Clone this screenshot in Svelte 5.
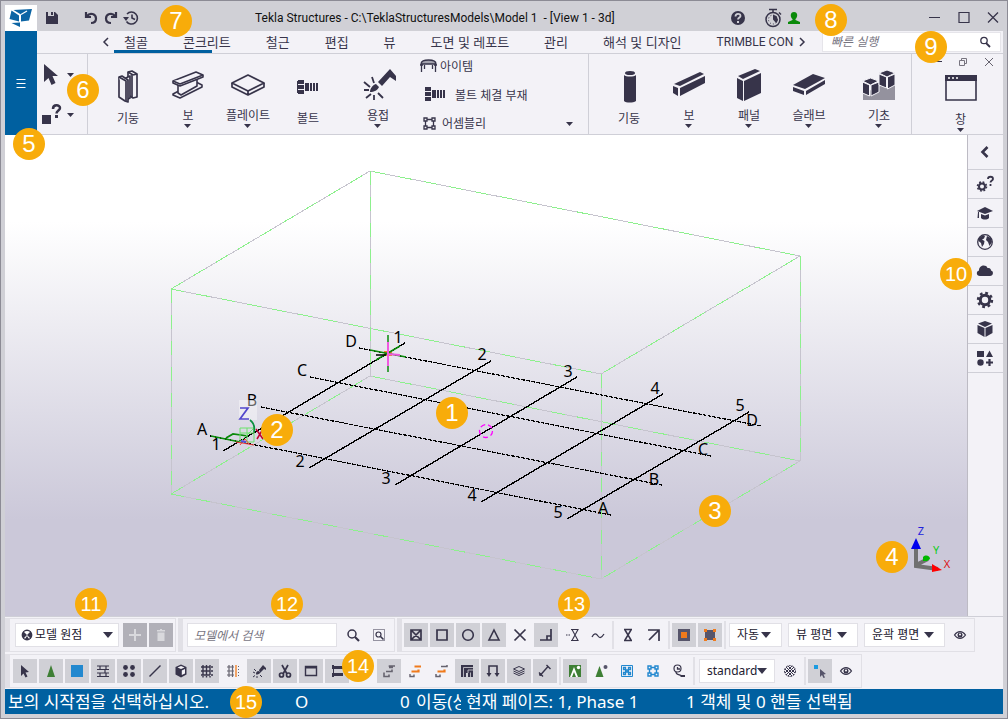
<script>
  const icons = {
    logo: '<g fill="#0b64a4"><path d="M4.500 5.500L2.500 14l9.500 2.500v-6z"/><path d="M6.500 5L25 4l-3 11.500-8 1V9.500z"/><path d="M4.500 18l8.500-.5V22z"/></g><path d="M14 9.500l6-3.500" stroke="#fff" stroke-width="1.200"/>',
    save: '<path fill="currentColor" d="M6 6h9l3 3v9H6z"/><path fill="#d0d0d6" d="M8 6h6v4H8z"/><path fill="currentColor" d="M11 6h2v3h-2z"/>',
    undo: '<path d="M7 6v5h5M8 10c3-4 9-2 9 2.500 0 3-2 4.500-5 4.500" fill="none" stroke="currentColor" stroke-width="2.200"/>',
    redo: '<path d="M17 6v5h-5M16 10c-3-4-9-2-9 2.500 0 3 2 4.500 5 4.500" fill="none" stroke="currentColor" stroke-width="2.200"/>',
    history: '<g fill="none" stroke="currentColor" stroke-width="1.600"><path d="M8 8a6 6 0 1 1-.5 7.500M13 8.500V12l3 1.500"/></g><path fill="currentColor" d="M4 11h6l-3 4z"/>',
    help: '<circle cx="12" cy="12" r="7" fill="currentColor"/><path d="M9.500 10.500c0-3.500 5-3.500 5-.5 0 1.500-2.500 1.500-2.500 3.500" fill="none" stroke="#d0d0d6" stroke-width="1.800"/><path fill="#d0d0d6" d="M11 15h2v2h-2z"/>',
    timer: '<circle cx="12" cy="13.500" r="7" fill="none" stroke="currentColor" stroke-width="1.500"/><path d="M12 9a4.500 4.500 0 0 1 3 8l-3-3.500z" fill="currentColor"/><circle cx="12" cy="13.500" r="4.500" fill="none" stroke="currentColor" stroke-dasharray="1 2"/><path d="M8 3.500h8M12 3.500v3M18 6.500l2 2" stroke="currentColor" stroke-width="1.500"/>',
    user: '<path fill="#0a8a0a" d="M12 6c4 0 4 5 1.500 7v1l4.500 2v2H6v-2l4.500-2v-1C8 11 8 6 12 6z"/>',
    min: '<path d="M6 11.500h11" stroke="currentColor"/>',
    max: '<path d="M7 6.500h10v10H7z" fill="none" stroke="currentColor" stroke-width="1.200"/>',
    close: '<path d="M7 6.500l10 10M17 6.500l-10 10" stroke="currentColor" stroke-width="1.300"/>',
    restore: '<path d="M8.500 10.500h5v5h-5zM10.500 10V8.500h5v5H14" fill="none" stroke="#77747f"/>',
    smallclose: '<path d="M8 8l8 8M16 8l-8 8" stroke="#66636f"/>',
    left: '<path d="M14 8l-4 4 4 4" fill="none" stroke="currentColor" stroke-width="1.500"/>',
    right: '<path d="M10 8l4 4-4 4" fill="none" stroke="currentColor" stroke-width="1.500"/>',
    search: '<circle cx="11" cy="11" r="4" fill="none" stroke="currentColor" stroke-width="1.500"/><path d="M14 14l4 4" stroke="currentColor" stroke-width="2.200"/>',
    searchSmall: '<circle cx="11" cy="10.500" r="3.200" fill="none" stroke="currentColor" stroke-width="1.300"/><path d="M13 13l4 4" stroke="currentColor" stroke-width="1.800"/>',
    searchBox: '<path d="M6.500 6.500h11v11h-11z" fill="none" stroke="currentColor" stroke-dasharray="1 1"/><circle cx="11.500" cy="11.500" r="2.500" fill="none" stroke="currentColor" stroke-width="1.200"/><path d="M13.500 13.500l3 3" stroke="currentColor" stroke-width="1.600"/>',
    menu: '<path d="M7.500 8.500h9M7.500 12.500h9M7.500 16.500h9" stroke="#fff" stroke-width="1.200"/>',
    pointer: '<path fill="currentColor" d="M4 1l14 12h-5.500l3 7-4 2-3-7L4 19z"/>',
    inquire: '<path fill="currentColor" d="M2 12h9v9H2z"/><path d="M13 6c0-5 7-4.500 7-1 0 2.500-3.500 2.500-3.500 5.500" fill="none" stroke="currentColor" stroke-width="2.500"/><path fill="currentColor" d="M15 12h3v3h-3z"/>',
    // ribbon, 36 px
    scolumn: '<g fill="#f3f2f7" stroke="currentColor" stroke-width="1.700" stroke-linejoin="round"><path d="M18 4l4-1 5 3v23l-4 1-5-3z"/><path d="M22 6v23M18 4l5 3M23 7l4-1"/><path d="M14 11l6-3v22l-4 2z"/><path d="M9 9l3-1 6 4v22l-3-1-6-4z"/><path d="M9 9l7 4v20"/></g>',
    sbeam: '<g fill="#f3f2f7" stroke="currentColor" stroke-width="1.600" stroke-linejoin="round"><path d="M3 26l23-12 6 3v2L10 30l-7-3z"/><path d="M8 16v9l3 2 16-9v-7"/><path d="M3 13L26 4l7 3v2L10 18l-7-3z"/><path d="M3 13l7 3L33 7"/></g>',
    plate: '<g fill="none" stroke="currentColor" stroke-width="1.700" stroke-linejoin="round"><path d="M2 15l16-8 16 8-16 8z"/><path d="M2 15v4l16 8 16-8v-4M18 23v4"/></g>',
    bolt: '<path fill="currentColor" d="M8 12h6v4H8zM8 17h6v4H8zM8 22h6v4H8zM15 15h4v8h-4zM20 15h2v8h-2zM23 15h2v8h-2zM26 15h2v8h-2z"/><path d="M7.500 13v12" stroke="currentColor"/>',
    weld: '<path fill="currentColor" d="M18 14L30 1l6 7v5l-6-4-8 9zM10 24c0-4 4-8 6-8l3 3c-1 3-5 5-9 5z"/><path d="M4 14l6 5M4 22h5M12 9l2 6M6 30l5-4M14 27v5M18 25l5 5" stroke="currentColor" stroke-width="1.800"/>',
    item: '<path d="M3 7c0-3 3-4 7.500-4S18 4 18 7z" fill="#a3a2ad" stroke="currentColor" stroke-width="1.300"/><path d="M3.500 7v8M17.500 7v8M6.500 8v4M14.500 8v4M2 8h3M16 8h3" stroke="currentColor" stroke-width="1.300" fill="none"/>',
    boltSmall: '<path fill="currentColor" d="M1 3h6v4H1zM1 8h6v4H1zM1 13h6v4H1zM8 6h4v8H8zM13 6h2v8h-2zM16 6h2v8h-2zM19 6h2v8h-2z"/>',
    assembly: '<g fill="none" stroke="currentColor" stroke-width="1.300"><path d="M4 4h3v3H4zM12 4h3v3h-3zM4 12h3v3H4zM12 12h3v3h-3zM7 5.500h5M7 13.500h5M5.500 7v5M13.500 7v5"/></g>',
    ccolumn: '<path fill="currentColor" d="M13 7v26c2 2 9 2 12 0V7c-2 2-10 2-12 0z"/><ellipse cx="19" cy="5" rx="5" ry="2" fill="currentColor"/>',
    cbeam: '<g fill="currentColor"><path d="M3 16L29 4l4 2L9 18z"/><path d="M2 18l5 2v8l-5-3zM9 20l25-12v7L9 28z"/></g>',
    panel: '<g fill="currentColor"><path d="M7 8L24 1l5 2-17 8z"/><path d="M6 10l6 3v20l-6-3zM13 13l17-8v20l-17 8z"/></g>',
    slab: '<g fill="currentColor"><path d="M2 17L22 6l12 4-20 11z"/><path d="M2 19l11 4v4L2 23zM15 23l19-11v4L15 27z"/></g>',
    footing: '<path fill="#94929e" d="M2 26l12-6 20-8v20H2z"/><g fill="currentColor" stroke="#f3f2f7"><path d="M1.500 13l8-3 8 3-8 4z"/><path d="M1.500 14l7 3v11l-7-3zM10 17l8-3v10l-8 4z"/><path d="M18 5l8-3 8 3-8 4z"/><path d="M18 6l7.500 3v11L18 17zM26.500 9L34 6v11l-7.500 4z"/></g>',
    window: '<path d="M3 6h30v24H3z" fill="none" stroke="currentColor" stroke-width="1.600"/><path fill="currentColor" d="M2 5h32v6H2z"/><path d="M5 8h2M9 8h2M13 8h2" stroke="#fff" stroke-width="1.500"/>',
    // side panel
    chev: '<path d="M14.500 7l-5 5 5 5" fill="none" stroke="currentColor" stroke-width="2.600"/>',
    gearq: '<circle cx="9" cy="14.500" r="3" fill="none" stroke="currentColor" stroke-width="2"/><circle cx="9" cy="14.500" r="4.500" fill="none" stroke="currentColor" stroke-width="1.600" stroke-dasharray="1.800 1.750"/><path d="M15 7c0-3 5-3 5 0 0 1.500-2.500 1.500-2.500 3.500M17.500 12v2" fill="none" stroke="currentColor" stroke-width="1.800"/>',
    cap: '<path fill="currentColor" d="M4 10l8-4 8 4-8 3zM8 13l4 1.500 4-1.500v4c-2 2-6 2-8 0zM5 11h1v6H4.500z"/>',
    globe: '<circle cx="12" cy="12" r="7.300" fill="none" stroke="currentColor" stroke-width="1.300"/><path fill="currentColor" d="M6 8l4-3 2 1-1 2.500-2 1 2.500 1.500-.5 3-2 3-1-4-2.500-2zM14 6l4 2 1 4-2.500 4-1.500-4-2-2z"/>',
    cloud: '<path fill="currentColor" d="M7 17c-4 0-4-5-1-5.500C6 6 13 5 14.500 9c3-.5 3.500 1.500 3.500 2.500 3 .5 2.500 5.500-1 5.500z"/>',
    gear: '<circle cx="12" cy="12" r="4.700" fill="none" stroke="currentColor" stroke-width="3"/><circle cx="12" cy="12" r="7" fill="none" stroke="currentColor" stroke-width="2.400" stroke-dasharray="2.750 2.750"/>',
    cube: '<path fill="currentColor" d="M12 4l7 2.500L12 10 5 6.500zM4.500 8l7 3v9l-7-4zM19.500 8l-7 3v9l7-4z"/>',
    shapes: '<path fill="currentColor" d="M4 5h7v6H4zM16.500 4.500l3.500 6.500h-7z"/><circle cx="7.500" cy="16.500" r="3.200" fill="currentColor"/><path d="M16.500 13v7M13 16.500h7" stroke="currentColor" stroke-width="2.200"/>',
    // toolbars
    ball: '<circle cx="7" cy="7" r="4.700" fill="#fff" stroke="currentColor" stroke-width="1.400"/><path fill="currentColor" d="M7 7L3 3v8zM7 7l4-4v8zM5 11l2-3 2 3z"/>',
    plus: '<path d="M12 6v12M6 12h12" stroke="#d9d9dd" stroke-width="2"/>',
    trash: '<path fill="#d9d9dd" d="M8 7h3V6h2v1h3v1.500H8zM8.500 9.500h7V18h-7z"/>',
    sqx: '<path d="M7 7h10v10H7zM7 7l10 10M17 7L7 17" fill="none" stroke="currentColor" stroke-width="1.700"/>',
    sq: '<path d="M7 7h10v10H7z" fill="none" stroke="currentColor" stroke-width="1.700"/>',
    circ: '<circle cx="12" cy="12" r="5.300" fill="none" stroke="currentColor" stroke-width="1.600"/>',
    tri: '<path d="M12 7l5 10H7z" fill="none" stroke="currentColor" stroke-width="1.600"/>',
    x: '<path d="M6.500 6.500l11 11M17.500 6.500l-11 11" stroke="currentColor" stroke-width="1.700"/>',
    perp: '<path d="M17 6v11H6M13 17v-4h4" fill="none" stroke="currentColor" stroke-width="1.700"/>',
    hourDots: '<path d="M6 12h5" stroke="currentColor" stroke-dasharray="1.500 1"/><path d="M11 6.500h7l-6 11h6l-6-11M11 17.500h2" fill="none" stroke="currentColor" stroke-width="1.100"/>',
    wave: '<path d="M6 14c2-4 4-4 6-1s4 1 6-2" fill="none" stroke="currentColor" stroke-width="1.300"/>',
    hour: '<path d="M8 6.500h8M8 17.500h8M9 7l6 10M15 7L9 17" fill="none" stroke="currentColor" stroke-width="1.500"/>',
    arrowNE: '<path d="M6 7h11v11M17 7L7 17" fill="none" stroke="currentColor" stroke-width="1.700"/>',
    snapA: '<path fill="#56546a" d="M6 6h12v12H6z"/><path fill="#f07a1c" d="M9 9h6v6H9z"/>',
    snapB: '<path fill="#56546a" d="M8 7h8l1 1v8l-1 1H8l-1-1V8z"/><path fill="#f07a1c" d="M6 6h3v3H6zM15 6h3v3h-3zM6 15h3v3H6zM15 15h3v3h-3z"/>',
    eye: '<path d="M6.500 12c3-4.500 8-4.500 11 0-3 4.500-8 4.500-11 0z" fill="none" stroke="currentColor" stroke-width="1.200"/><circle cx="12" cy="12" r="2.500" fill="currentColor"/><circle cx="12" cy="11.500" r="1" fill="#fff"/>',
    arrow: '<path fill="currentColor" d="M8 6l8 7-3.500.5 2 4-2 1-2-4L8 17z"/>',
    cone: '<path fill="#3e7f35" d="M12 6l4 12H8z"/>',
    blue: '<path fill="#2288cf" d="M6 6h12v12H6z"/>',
    grate: '<path d="M6 7h12M6 10.500h12M6 14h12M6 17.500h12M9 7v3M14 10v4M9 14v3M15 7v3M15 14v3" stroke="currentColor" stroke-width="1.200"/>',
    dots: '<g fill="currentColor"><circle cx="8.500" cy="8.500" r="2.400"/><circle cx="15.500" cy="8.500" r="2.400"/><circle cx="8.500" cy="15.500" r="2.400"/><circle cx="15.500" cy="15.500" r="2.400"/></g>',
    line: '<path d="M6.500 17.500l11-11" stroke="currentColor" stroke-width="1.400"/>',
    box: '<path fill="currentColor" d="M12 5.500l5.500 2.500v7.500L12 18.500l-5.500-3V8z"/><path fill="#f3f2f7" d="M12 7l3.500 1.500L12 10 8.500 8.500zM12.800 11.500l3.200-1.500v4.500L12.800 16z"/>',
    grid: '<path d="M6 8h9M6 12h9M6 16h9M8 6v10M11.500 6v10M15 6v10" stroke="currentColor" stroke-width="1.400"/><path d="M16 8h2M16 12h2M16 16h2M8 17v1.500M11.500 17v1.500M15 17v1.500" stroke="currentColor" stroke-width="1.400"/>',
    gridO: '<path d="M6 8h7M6 12h7M6 16h7M8 6v12M11.500 6v12" stroke="#66636f" stroke-width="1.200"/><path d="M15 6v12" stroke="#f07a1c" stroke-width="1.300"/><path d="M17.500 7v11" stroke="#66636f" stroke-dasharray="1 2"/>',
    weldS: '<path fill="currentColor" d="M12 11l4-5 3 3v2l-2-1-4 4zM9 15c0-2 1-3 2.500-3l1.500 1.500c0 1.500-2 2-4 2z"/><path d="M6 13l2 1M7 10l2 2M6 18l2-1.500M10 17v2M13 16l2 2" stroke="currentColor"/>',
    cut: '<g fill="none" stroke="currentColor" stroke-width="1.700"><circle cx="8.500" cy="16" r="2"/><circle cx="15.500" cy="16" r="2"/><path d="M10 15l5-9M14 15L9 6"/></g>',
    win: '<path d="M6.500 7.500h11v9h-11z" fill="none" stroke="currentColor" stroke-width="1.400"/><path d="M6 8.500h12" stroke="currentColor" stroke-width="2"/>',
    ibeam: '<path fill="currentColor" d="M7 6h2v1h9v3H9v4h9v3H9v1H7v-4h1v-4H7z"/>',
    stairs: '<path d="M7 13.500v4h5v-2M9 12.500h6v-2M12.500 8v-1H18M12 8.500h4" fill="none" stroke="#66636f" stroke-width="1.600"/>',
    stairsO: '<path d="M7 15v2.500h4v-2" fill="none" stroke="#66636f" stroke-width="1.400"/><path d="M8.500 12.500h7v-2M11.500 7.500h6.500" fill="none" stroke="#f07a1c" stroke-width="2.200"/>',
    stairsP: '<path d="M7 15v2.500h4v-2M12 7.500h6v-1.500" fill="none" stroke="#66636f" stroke-width="1.500"/><path d="M8.500 12.500h7v-2" fill="none" stroke="#f07a1c" stroke-width="2.200"/>',
    maze: '<path fill="currentColor" d="M6 6h12v12h-5v-4h-2v4H6z"/><path d="M8.500 18V8.500H18M13 14v-3h5M15.500 18v-4.500" stroke="#d0d0d6" stroke-width=".8" fill="none"/>',
    turn: '<path d="M8 16V7h8v9" fill="none" stroke="currentColor" stroke-width="1.600"/><path fill="currentColor" d="M5.500 14h5L8 18zM13.500 14h5L16 18z"/>',
    layers: '<path d="M6.500 10L12 7.500l5.500 2.500-5.500 2.500zM6.500 12l5.500 2.500 5.500-2.500M6.500 14l5.500 2.500 5.500-2.500" fill="none" stroke="currentColor"/>',
    dim: '<path d="M7.500 16L15 7.500M6 13.500l4 4M13.500 6l4 4" fill="none" stroke="currentColor" stroke-width="1.400"/><circle cx="7.500" cy="15.500" r="1.500" fill="currentColor"/>',
    greenA: '<path fill="#3e7f35" d="M6 6h12v12H6z"/><path fill="#fff" d="M11 8l4 10h-2l-2-5-2 5H7z"/><circle cx="15.500" cy="8.500" r="1.700" fill="#fff"/>',
    greenB: '<path fill="#3e7f35" d="M10.500 7l4 11h-8z"/><circle cx="16.500" cy="8" r="2" fill="#56546a"/>',
    blueA: '<path d="M6.500 6.500h11v11h-11z" fill="none" stroke="#2288cf"/><g fill="none" stroke="#2288cf" stroke-width="1.300"><path d="M8.500 8.500h2v2h-2zM13.500 8.500h2v2h-2zM8.500 13.500h2v2h-2zM13.500 13.500h2v2h-2zM12 10v4M10 12h4"/></g>',
    blueB: '<g fill="none" stroke="#2288cf" stroke-width="1.400"><path d="M7 7h3v3H7zM14 7h3v3h-3zM7 14h3v3H7zM14 14h3v3h-3zM10 8.500h4M10 15.500h4M8.500 10v4M15.500 10v4"/></g>',
    zoomer: '<circle cx="10.500" cy="9.500" r="3.500" fill="none" stroke="currentColor" stroke-width="1.200"/><path d="M10.500 8v2H13M9 13c0 3 3 2 5 3.500" fill="none" stroke="currentColor" stroke-width="1.300"/><path d="M13.500 17H18" stroke="currentColor" stroke-width="2"/>',
    mesh: '<g fill="none" stroke="currentColor"><circle cx="12" cy="12" r="5.500" stroke-dasharray="2 1"/><path d="M8 8l8 8M16 8l-8 8M10 7l7 7M7 10l7 7M14 7l-7 7M17 10l-7 7"/></g>',
    pick: '<path fill="#1b9be0" d="M6 6h4v4H6z"/><path fill="#56546a" d="M12 10l6 5-2.500.5 1.500 3-1.500.5-1.500-3-2 2z"/>'
  };

  const tabs = ['철골', '콘크리트', '철근', '편집', '뷰', '도면 및 레포트', '관리', '해석 및 디자인', 'TRIMBLE CONN'];
  const steel = [['scolumn', '기둥', false], ['sbeam', '보', true], ['plate', '플레이트', true], ['bolt', '볼트', false], ['weld', '용접', true]];
  const concrete = [['ccolumn', '기둥', false], ['cbeam', '보', true], ['panel', '패널', true], ['slab', '슬래브', true], ['footing', '기초', true]];
  const side = [['chev', '펼치기'], ['gearq', '명령 도움말'], ['cap', '학습'], ['globe', '온라인'], ['cloud', '클라우드'], ['gear', '설정'], ['cube', '모델'], ['shapes', '컴포넌트']];

  const snaps = [['sqx', 1], ['sq', 1], ['circ', 1], ['tri', 1], ['x', 0], ['perp', 1], ['hourDots', 0], ['wave', 0]];
  const selA = [['arrow', 1], ['cone', 1], ['blue', 1], ['grate', 1], ['dots', 1], ['line', 1], ['box', 1], ['grid', 1], ['gridO', 0], ['weldS', 1], ['cut', 1], ['win', 1], ['ibeam', 1]];
  const selB = [['stairs', 1], ['stairsO', 0], ['stairsP', 0], ['maze', 1], ['turn', 1], ['layers', 1], ['dim', 1]];
  const selC = [['greenA', 1], ['greenB', 0], ['blueA', 0], ['blueB', 0], ['zoomer', 0]];

  const boxEdges = 'M171 289L370 171L800 256L601 374ZM171 494L370 376L800 461L601 579ZM171 289V494M370 171V376M800 256V461M601 374V579';
  const numbered = 'M223 451L405 343M309 468L491 361M395 485L577 377M481 502L663 394M567 519L749 412';
  const lettered = 'M210 436L611 515M261 407L662 485M310 377L711 456M359 348L761 426';
  const gridLabels = [
    ['D', 351, 347], ['C', 302, 376], ['B', 252, 406], ['A', 202, 435],
    ['1', 216, 450], ['2', 300, 467], ['3', 386, 484], ['4', 472, 501], ['5', 558, 518],
    ['1', 398, 343], ['2', 482, 360], ['3', 568, 377], ['4', 655, 394], ['5', 740, 411],
    ['D', 752, 426], ['C', 703, 455], ['B', 654, 485], ['A', 603, 514]
  ];

  const callouts = [
    [1, 452, 413], [2, 277, 430], [3, 715, 511], [4, 892, 557], [5, 29, 144],
    [6, 83, 90], [7, 176, 21], [8, 831, 20], [9, 931, 47], [10, 956, 274],
    [11, 91, 604], [12, 287, 604], [13, 574, 604], [14, 358, 666], [15, 246, 702]
  ];
</script>

{#snippet icon(name, size = 24)}
  <svg width={size} height={size} viewBox="0 0 {size} {size}" aria-hidden="true">{@html icons[name]}</svg>
{/snippet}

{#snippet caret()}
  <svg class="caret" width="8" height="4" viewBox="0 0 8 4" aria-hidden="true"><path fill="currentColor" d="M0 0h7L3.500 4z" /></svg>
{/snippet}

{#snippet tool(name, on)}
  <button class="tool" class:on={!!on} aria-label={name} aria-pressed={!!on}>{@render icon(name)}</button>
{/snippet}

{#snippet command([name, label, more])}
  <button class="command" class:more>
    {@render icon(name, 36)}
    <span class="label">{label}</span>
    {#if more}{@render caret()}{/if}
  </button>
{/snippet}

<div class="window">
  <header class="title">
    <div class="logo">{@render icon('logo', 28)}</div>
    <div class="quick">
      <button aria-label="저장">{@render icon('save')}</button>
      <button class="undo" aria-label="실행 취소">{@render icon('undo')}</button>
      <button aria-label="다시 실행">{@render icon('redo')}</button>
      <button aria-label="기록">{@render icon('history')}</button>
    </div>
    <h1>Tekla Structures - C:\TeklaStructuresModels\Model 1 &nbsp;- [View 1 - 3d]</h1>
    <div class="account">
      <button aria-label="도움말">{@render icon('help')}</button>
      <button aria-label="라이선스">{@render icon('timer')}</button>
      <button class="user" aria-label="사용자">{@render icon('user')}</button>
    </div>
    <div class="controls">
      <button aria-label="최소화">{@render icon('min')}</button>
      <button aria-label="최대화">{@render icon('max')}</button>
      <button aria-label="닫기">{@render icon('close')}</button>
    </div>
  </header>

  <section class="ribbon">
    <button class="file" aria-label="파일 메뉴">{@render icon('menu')}</button>
    <div class="ribbon-main">
      <nav class="tabs">
        <button class="scroll" aria-label="이전">{@render icon('left')}</button>
        <div class="tablist">
          {#each tabs as tab, i}
            <button class="tab" class:active={i === 0}>{tab}</button>
          {/each}
        </div>
        <button class="scroll next" aria-label="다음">{@render icon('right')}</button>
        <label class="quick-launch">
          <input type="text" placeholder="빠른 실행" aria-label="빠른 실행" />
          {@render icon('searchSmall')}
        </label>
      </nav>
      <div class="commands">
        <div class="group pick">
          <button aria-label="선택">{@render icon('pointer')}{@render caret()}</button>
          <button aria-label="객체 조회">{@render icon('inquire')}{@render caret()}</button>
        </div>
        <div class="group steel">
          {#each steel as c}{@render command(c)}{/each}
          <div class="stack">
            <button>{@render icon('item', 20)}<span>아이템</span></button>
            <button class="bolted">{@render icon('boltSmall', 23)}<span>볼트 체결 부재</span></button>
            <button class="assembly">{@render icon('assembly', 20)}<span>어셈블리</span>{@render caret()}</button>
          </div>
        </div>
        <div class="group concrete">
          {#each concrete as c}{@render command(c)}{/each}
        </div>
        <div class="group views">
          <div class="mdi">
            <button aria-label="뷰 최소화">{@render icon('min')}</button>
            <button aria-label="뷰 복원">{@render icon('restore')}</button>
            <button aria-label="뷰 닫기">{@render icon('smallclose')}</button>
          </div>
          {@render command(['window', '창', true])}
        </div>
      </div>
    </div>
  </section>

  <main>
    <svg class="scene" viewBox="5 135 962 481" preserveAspectRatio="xMidYMid slice" role="img" aria-label="3D 뷰">
      <g fill="none" shape-rendering="crispEdges">
        <path d={boxEdges} stroke="#c6c4ce" />
        <path d={boxEdges} stroke="#8df08d" stroke-dasharray="14 12" />
        <path d={numbered} stroke="#000" stroke-width="1.400" />
        <path d={lettered} stroke="#000" stroke-width="1.200" stroke-dasharray="4 1" />
      </g>
      <g font-size="16" text-anchor="middle">
        {#each gridLabels as [t, x, y]}<text {x} {y}>{t}</text>{/each}
      </g>
      <circle cx="486" cy="431" r="6.500" fill="none" stroke="#f0f" stroke-width="1.300" stroke-dasharray="5 3" />
      <g fill="none">
        <path d="M384 351h8v5h-8z" fill="#f08030" />
        <path d="M388 335V372M370 350L406 357M376 360L400 346" stroke="#0a8a0a" stroke-width="1.500" />
        <path d="M376 355H386" stroke="#000" stroke-width="1.500" />
        <path d="M388 342V366M388 354L400 355" stroke="#f05ae0" stroke-width="2" />
      </g>
      <g fill="none">
        <path d="M239 400h18v20h-18z" fill="#fff" opacity=".4" />
        <path d="M211 436L240 442M226 438L233 434L248 436" stroke="#0a8a0a" stroke-width="1.700" />
        <path d="M240 428h14v14h-14zM240 433h14M247 428v14M240 442l14-14" stroke="#6be36b" />
        <path d="M236 442l18 3M240 445l5-6 5 6" stroke="#f04040" />
        <path d="M241 441l5 1" stroke="#5050e0" stroke-width="2" />
        <path d="M250 420c4 3 5 7 4 12" stroke="#0a9040" stroke-width="1.700" />
        <path d="M256 429l7 10M263 429l-6 10" stroke="#c00030" stroke-width="1.500" />
        <path d="M240 408h8l-8 11h9" stroke="#5146cc" stroke-width="1.700" />
      </g>
      <g>
        <path d="M916 548V566L938 569M918 564L928 559" fill="none" stroke="#707070" stroke-width="4" />
        <path d="M916 538l5 11h-10z" fill="#00e" />
        <path d="M932 564l10 6-10 2z" fill="#f00" />
        <path d="M923 561v-4c3-3 7-1 7 2l-3 2z" fill="#00b800" />
        <g font-size="11" text-anchor="middle">
          <text x="921" y="535" fill="#22d">Z</text>
          <text x="936" y="554" fill="#1c2">Y</text>
          <text x="947" y="568" fill="#d11">X</text>
        </g>
      </g>
    </svg>
    <aside>
      {#each side as [name, label]}
        <button aria-label={label}>{@render icon(name)}</button>
      {/each}
    </aside>
  </main>

  <footer class="bars">
    <div class="bar">
      <div class="panel origin">
        <label class="drop wide">{@render icon('ball', 14)}<select aria-label="원점"><option>모델 원점</option></select></label>
        <button class="tool off" aria-label="추가">{@render icon('plus')}</button>
        <button class="tool off" aria-label="삭제">{@render icon('trash')}</button>
      </div>
      <div class="panel find">
        <input type="text" placeholder="모델에서 검색" aria-label="모델에서 검색" />
        {@render tool('search', 0)}
        {@render tool('searchBox', 0)}
      </div>
      <div class="panel snap">
        {#each snaps as [n, on]}{@render tool(n, on)}{/each}
        <i></i>
        {@render tool('hour', 0)}{@render tool('arrowNE', 0)}
        <i></i>
        {@render tool('snapA', 1)}{@render tool('snapB', 1)}
        <i></i>
        <label class="drop auto"><select aria-label="스냅 깊이"><option>자동</option></select></label>
        <label class="drop view"><select aria-label="평면"><option>뷰 평면</option></select></label>
        <label class="drop outline"><select aria-label="윤곽"><option>윤곽 평면</option></select></label>
        {@render tool('eye', 0)}
      </div>
    </div>
    <div class="bar">
      <div class="panel select">
        {#each selA as [n, on]}{@render tool(n, on)}{/each}
        <span class="gap"></span>
        {#each selB as [n, on]}{@render tool(n, on)}{/each}
        <i></i>
        {#each selC as [n, on]}{@render tool(n, on)}{/each}
        <i></i>
        <label class="drop filter"><select aria-label="선택 필터"><option>standard</option></select></label>
        {@render tool('mesh', 0)}
        <i></i>
        {@render tool('pick', 1)}
        {@render tool('eye', 0)}
      </div>
    </div>
    <div class="status">
      <span>보의 시작점을 선택하십시오.</span>
      <span>O</span>
      <span>0</span>
      <span>이동(상</span>
      <span>현재 페이즈: 1, Phase 1</span>
      <span>1 객체 및 0 핸들 선택됨</span>
    </div>
  </footer>

  {#each callouts as [n, x, y]}
    <b class="callout" class:two={n > 9} style="left:{x}px;top:{y}px">{n}</b>
  {/each}
</div>

<style>
  :global(body) { margin: 0; }
  * { box-sizing: border-box; }
  .window {
    position: relative;
    display: flex;
    flex-direction: column;
    min-height: 100vh;
    padding: 4px;
    border: 1px solid #8c8b95;
    background: #d0d0d6;
    color: #37344a;
    font: 12px/16px "Noto Sans", "Noto Sans CJK KR", sans-serif;
    overflow: hidden;
  }
  button { display: flex; align-items: center; justify-content: center; padding: 0; border: 0; background: none; color: inherit; font: inherit; }
  input, select { min-width: 0; border: 0; background: none; padding: 0; color: inherit; font: inherit; outline: 0; }
  svg { display: block; flex: none; }
  input::placeholder { color: #77747f; font-style: italic; opacity: 1; }

  .title { display: flex; align-items: center; height: 26px; }
  .logo { width: 32px; height: 26px; padding-left: 2px; background: #fff; overflow: hidden; }
  .quick { display: flex; width: 218px; padding-left: 3px; }
  .quick button { width: 20px; }
  .quick button:first-child { width: 24px; }
  .quick .undo { margin-left: 17px; }
  h1 { flex: 1; margin: 0; color: #111; font: 400 12px/16px Roboto, "Noto Sans CJK KR", sans-serif; white-space: nowrap; }
  .account { display: flex; width: 197px; }
  .account button:nth-child(2) { margin-left: 11px; }
  .account .user { margin-left: -3px; }
  .controls { display: flex; gap: 5px; margin-right: -2px; }

  .ribbon { display: flex; background: #f3f2f7; }
  .file { width: 32px; background: #0060a0; }
  .ribbon-main { flex: 1; min-width: 0; }
  .tabs { display: flex; height: 23px; border-bottom: 1px solid #cfcfd7; }
  .scroll { width: 12px; margin-left: 63px; margin-right: -6px; }
  .scroll.next { margin: 0; width: 16px; }
  .tablist { display: flex; flex: 1; min-width: 0; overflow: hidden; }
  .tab { position: relative; flex: none; height: 22px; padding: 0 17px 0 18px; font-size: 13px; white-space: nowrap; }
  .tab:last-child { padding-right: 0; font-family: Roboto, sans-serif; font-size: 12px; }
  .tab.active::after { content: ""; position: absolute; left: 8px; bottom: 0; width: 98px; height: 3px; background: #0060a0; }
  .quick-launch { display: flex; align-items: center; width: 179px; height: 20px; margin: 1px 2px 0 12px; padding: 0 3px 0 8px; background: #fff; border: 1px solid #e6e5ea; }
  .quick-launch input { flex: 1; }

  .commands { display: flex; height: 81px; border-bottom: 1px solid #cfcfd7; }
  .group { display: flex; border-left: 1px solid #cfcfd7; }
  .pick { flex-direction: column; gap: 16px; width: 50px; padding: 9px 0 0 3px; border: 0; }
  .pick button { justify-content: flex-start; gap: 3px; }
  .command { flex-direction: column; justify-content: flex-start; width: 60px; padding-top: 14px; }
  .label { margin-top: 7px; white-space: nowrap; }
  .more .label { margin-top: 4px; }
  .steel { flex: 1; padding-left: 10px; }
  .concrete { width: 323px; padding-left: 10px; }
  .steel .command:nth-of-type(5), .concrete .command:last-child { margin-left: 10px; }
  .stack { display: flex; flex: 1; flex-direction: column; justify-content: space-between; padding: 3px 14px 0 10px; }
  .stack button { justify-content: flex-start; gap: 2px; height: 20px; }
  .stack .bolted { padding-left: 6px; gap: 8px; }
  .stack .assembly { padding-left: 2px; }
  .stack .assembly :global(.caret) { margin-left: auto; }
  .views { flex-direction: column; align-items: center; width: 92px; padding-left: 6px; }
  .mdi { display: flex; align-self: flex-end; height: 16px; gap: 2px; padding-right: 2px; }
  .mdi button { height: 16px; }
  .views .command { padding-top: 0; }
  .views .label { margin-top: 6px; }

  main { display: flex; flex: 1; min-height: 200px; border-bottom: 1px solid #cfcfd7; background: #f3f2f7; }
  .scene { flex: 1; min-width: 0; min-height: 0; height: auto; background: linear-gradient(#fff 18%, #cbc8d9 80%); }
  aside { display: flex; flex-direction: column; width: 36px; border-left: 1px solid #bdbbc4; }
  aside button { height: 29px; padding-right: 2px; border-bottom: 1px solid #cfcfd7; }
  aside button:first-child { height: 35px; }

  .bars { background: #f3f2f7; }
  .bar { display: flex; gap: 2px; height: 36px; padding-top: 1px; }
  .panel { display: flex; align-items: center; gap: 2px; height: 34px; padding-left: 2px; border: 1px solid #e1e0e6; border-left: 5px solid #e1e0e6; }
  .tool { width: 24px; height: 24px; }
  .tool.on { background: #d0d0d6; }
  .tool.off { background: #b1b0b8; }
  .panel i { width: 2px; height: 28px; background: #e1e0e6; }
  .drop { display: flex; align-items: center; height: 24px; background: #fff; border: 1px solid #e1e0e6; }
  select {
    flex: 1;
    height: 22px;
    padding-left: 7px;
    appearance: none;
    color: #222030;
    background: url("data:image/svg+xml,%3Csvg xmlns='http://www.w3.org/2000/svg' width='10' height='6'%3E%3Cpath d='M0 0h10L5 6z' fill='%2337344a'/%3E%3C/svg%3E") no-repeat right 10px center;
  }
  .origin { width: 171px; padding-left: 5px; }
  .wide { width: 104px; margin-right: 2px; padding-left: 4px; }
  .wide select { padding-left: 1px; background-position: right 5px center; }
  .find { width: 217px; padding-left: 4px; }
  .find input { width: 150px; height: 24px; margin-right: 2px; padding-left: 6px; background: #fff; border: 1px solid #e1e0e6; }
  .snap { width: 578px; }
  .snap .drop { margin-right: 4px; }
  .snap .outline { margin-right: 1px; }
  .snap i + .drop { margin-left: 1px; }
  .auto { width: 53px; }
  .view { width: 70px; }
  .outline { width: 81px; }
  .select { width: 857px; padding-left: 3px; }
  .gap { width: 24px; }
  .filter { width: 76px; margin: 0 1px 0 2px; }
  .filter select { background-position: right 7px center; }
  .status { display: grid; grid-template-columns: 287px 105px 16px 45px 225px 1fr; align-items: center; height: 25px; padding-left: 3px; background: #0060a0; color: #fff; font-size: 17px; line-height: 25px; }
  .status span { overflow: hidden; white-space: nowrap; }
  .status span:nth-child(5) { padding-left: 5px; }

  .callout { position: absolute; width: 32px; height: 32px; margin: -17px; border-radius: 50%; background: #f8ac0a; color: #fff; font: 24px/32px "Liberation Sans", sans-serif; text-align: center; }
  .callout.two { font-size: 20px; }
</style>
